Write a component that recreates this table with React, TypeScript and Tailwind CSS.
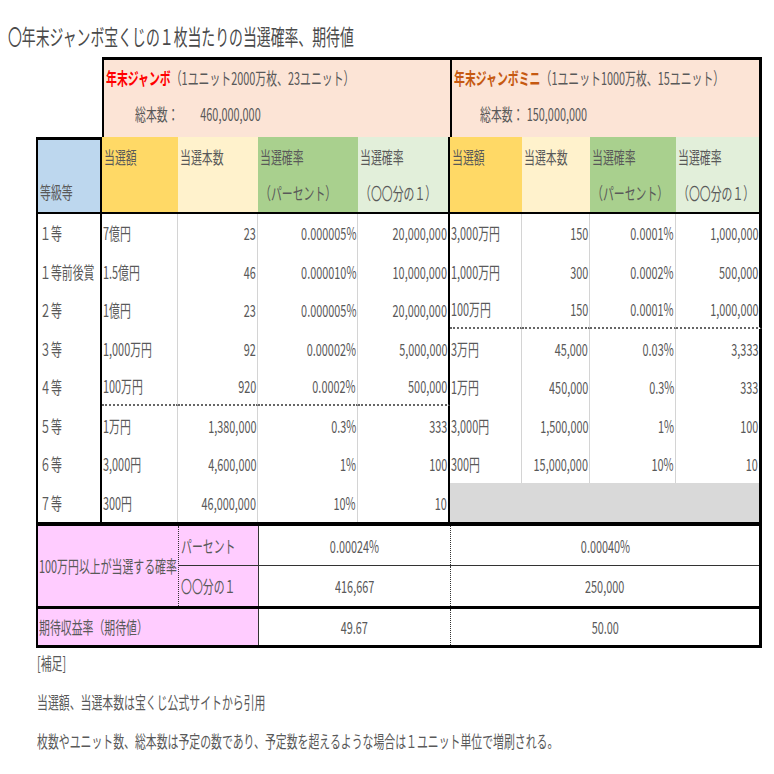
import type { ReactNode } from "react";

// column widths, left to right (等級等 | jumbo x4 | mini x4)
const W = ["w-[66px]", "w-[76px]", "w-[80px]", "w-[100px]", "w-[92px]", "w-[72px]", "w-[68px]", "w-[86px]", "w-[86px]"];

const labels = ["１等", "１等前後賞", "２等", "３等", "４等", "５等", "６等", "７等"];

const jumbo = [
  ["7億円", "23", "0.000005%", "20,000,000"],
  ["1.5億円", "46", "0.000010%", "10,000,000"],
  ["1億円", "23", "0.000005%", "20,000,000"],
  ["1,000万円", "92", "0.00002%", "5,000,000"],
  ["100万円", "920", "0.0002%", "500,000"],
  ["1万円", "1,380,000", "0.3%", "333"],
  ["3,000円", "4,600,000", "1%", "100"],
  ["300円", "46,000,000", "10%", "10"],
];

const mini: (string[] | null)[] = [
  ["3,000万円", "150", "0.0001%", "1,000,000"],
  ["1,000万円", "300", "0.0002%", "500,000"],
  ["100万円", "150", "0.0001%", "1,000,000"],
  ["3万円", "45,000", "0.03%", "3,333"],
  ["1万円", "450,000", "0.3%", "333"],
  ["3,000円", "1,500,000", "1%", "100"],
  ["300円", "15,000,000", "10%", "10"],
  null,
];

// the sheet's font is a narrow one, so squeeze the glyphs horizontally
function T({
  children,
  o = "l",
  s = "scale-x-[0.64]",
}: {
  children: ReactNode;
  o?: "l" | "r" | "c";
  s?: string;
}) {
  const origin = o === "r" ? "origin-right" : o === "c" ? "origin-center" : "origin-left";
  return <span className={`inline-block whitespace-nowrap ${s} ${origin}`}>{children}</span>;
}

function HeadCell({ w, bg, l1, l2, edge }: { w: string; bg: string; l1?: string; l2?: string; edge: string }) {
  return (
    <div className={`${w} ${bg} ${edge} flex flex-col pt-[2px] pl-[2px]`}>
      <div className="h-[36px] leading-[36px]">{l1 && <T>{l1}</T>}</div>
      <div className="h-[36px] leading-[36px]">{l2 && <T>{l2}</T>}</div>
    </div>
  );
}

const gridR = "border-r border-[#d4d4d4]";

export default function App() {
  return (
    <div className="min-h-[774px] w-[774px] overflow-hidden bg-white font-['Noto_Sans_CJK_JP',sans-serif] text-[17px] text-[#595959]">
      <div className="h-[57px] pl-[8px] pt-[22px] text-[22px] leading-[26px] text-[#4a4a4a]">
        <T s="scale-x-[0.63]">〇年末ジャンボ宝くじの１枚当たりの当選確率、期待値</T>
      </div>

      <div className="ml-[36px] w-[726px]">
        {/* lottery header */}
        <div className="flex h-[80px]">
          <div className="w-[66px]" />
          <div className="w-[348px] border-l-2 border-t-[3px] border-black bg-[#fce4d6] pl-[2px] leading-[36px]">
            <div>
              <T>
                <span className="font-bold text-[#ff0000]">年末ジャンボ</span>（1ユニット2000万枚、23ユニット）
              </T>
            </div>
            <div className="pl-[29px]">
              <T>
                総本数：<span className="ml-[34px]">460,000,000</span>
              </T>
            </div>
          </div>
          <div className="w-[312px] border-l-2 border-r-[3px] border-t-[3px] border-black bg-[#fce4d6] pl-[2px] leading-[36px]">
            <div>
              <T>
                <span className="font-bold text-[#c65911]">年末ジャンボミニ</span>（1ユニット1000万枚、15ユニット）
              </T>
            </div>
            <div className="pl-[26px]">
              <T>
                総本数：<span className="ml-[5px]">150,000,000</span>
              </T>
            </div>
          </div>
        </div>

        {/* column header */}
        <div className="flex h-[77px] border-b-2 border-black">
          <div className="w-[66px] border-x-2 border-t-[3px] border-black bg-[#bdd7ee] pl-[2px]">
            <div className="h-[34px]" />
            <div className="h-[36px] leading-[36px]">
              <T>等級等</T>
            </div>
          </div>
          <HeadCell w={W[1]} bg="bg-[#ffd966]" l1="当選額" edge="" />
          <HeadCell w={W[2]} bg="bg-[#fff2cc]" l1="当選本数" edge="" />
          <HeadCell w={W[3]} bg="bg-[#a9d08e]" l1="当選確率" l2="（パーセント）" edge="" />
          <HeadCell w={W[4]} bg="bg-[#e2efda]" l1="当選確率" l2="（〇〇分の１）" edge="border-r-2 border-black" />
          <HeadCell w={W[5]} bg="bg-[#ffd966]" l1="当選額" edge="" />
          <HeadCell w={W[6]} bg="bg-[#fff2cc]" l1="当選本数" edge="" />
          <HeadCell w={W[7]} bg="bg-[#a9d08e]" l1="当選確率" l2="（パーセント）" edge="" />
          <HeadCell w={W[8]} bg="bg-[#e2efda]" l1="当選確率" l2="（〇〇分の１）" edge="border-r-[3px] border-black" />
        </div>

        {/* prize rows */}
        {labels.map((label, i) => {
          const h = i % 2 ? "h-[39px]" : "h-[38px]";
          const jd = i === 4 ? "border-b-2 border-b-[#666] [border-bottom-style:dotted]" : "";
          const md = i === 2 ? "border-b-2 border-b-[#666] [border-bottom-style:dotted]" : "";
          const j = jumbo[i];
          const m = mini[i];
          return (
            <div key={label} className={`flex ${h}`}>
              <div className={`${W[0]} flex items-center border-x-2 border-black pl-[2px]`}>
                <T>{label}</T>
              </div>
              <div className={`${W[1]} ${gridR} ${jd} flex items-center pl-[1px]`}>
                <T>{j[0]}</T>
              </div>
              <div className={`${W[2]} ${gridR} ${jd} flex items-center justify-end pr-[1px]`}>
                <T o="r">{j[1]}</T>
              </div>
              <div className={`${W[3]} ${gridR} ${jd} flex items-center justify-end pr-[1px]`}>
                <T o="r">{j[2]}</T>
              </div>
              <div className={`${W[4]} border-r-2 border-black ${jd} flex items-center justify-end pr-[1px]`}>
                <T o="r">{j[3]}</T>
              </div>
              {m ? (
                <>
                  <div className={`${W[5]} ${gridR} ${md} flex items-center pl-[1px]`}>
                    <T>{m[0]}</T>
                  </div>
                  <div className={`${W[6]} ${gridR} ${md} flex items-center justify-end pr-[1px]`}>
                    <T o="r">{m[1]}</T>
                  </div>
                  <div className={`${W[7]} ${gridR} ${md} flex items-center justify-end pr-[1px]`}>
                    <T o="r">{m[2]}</T>
                  </div>
                  <div className={`${W[8]} border-r-[3px] border-black ${md} flex items-center justify-end pr-[1px]`}>
                    <T o="r">{m[3]}</T>
                  </div>
                </>
              ) : (
                <div className="w-[312px] border-r-[3px] border-black bg-[#d9d9d9]" />
              )}
            </div>
          );
        })}

        {/* 100万円以上 */}
        <div className="flex border-l-2 border-r-[3px] border-t-4 border-black">
          <div className="flex w-[140px] items-center bg-[#ffccff] pl-[1px]">
            <T>100万円以上が当選する確率</T>
          </div>
          <div className="w-[80px] border-l border-dotted border-[#333] bg-[#ffccff]">
            <div className="flex h-[40px] items-center border-b border-[#333] pl-[2px]">
              <T>パーセント</T>
            </div>
            <div className="flex h-[40px] items-center pl-[2px]">
              <T>〇〇分の１</T>
            </div>
          </div>
          <div className="w-[501px]">
            <div className="flex h-[40px] border-b border-[#333]">
              <div className="flex w-[192px] items-center justify-center border-l border-[#333]">
                <T o="c">0.00024%</T>
              </div>
              <div className="flex w-[309px] items-center justify-center border-l border-dotted border-[#333]">
                <T o="c">0.00040%</T>
              </div>
            </div>
            <div className="flex h-[40px]">
              <div className="flex w-[192px] items-center justify-center border-l border-[#333]">
                <T o="c">416,667</T>
              </div>
              <div className="flex w-[309px] items-center justify-center border-l border-dotted border-[#333]">
                <T o="c">250,000</T>
              </div>
            </div>
          </div>
        </div>

        {/* 期待値 */}
        <div className="flex h-[42px] border-y-[3px] border-l-2 border-r-[3px] border-black">
          <div className="flex w-[220px] items-center bg-[#ffccff] pl-[1px]">
            <T>期待収益率（期待値）</T>
          </div>
          <div className="flex w-[192px] items-center justify-center border-l border-[#333]">
            <T o="c">49.67</T>
          </div>
          <div className="flex w-[309px] items-center justify-center border-l border-dotted border-[#333]">
            <T o="c">50.00</T>
          </div>
        </div>

        {/* notes */}
        <div className="w-[726px] overflow-hidden pl-[1px]">
          <div className="h-[30px] leading-[30px]">
            <T>[補足]</T>
          </div>
          <div className="mt-[5px] h-[38px] leading-[38px]">
            <T>当選額、当選本数は宝くじ公式サイトから引用</T>
          </div>
          <div className="h-[39px] leading-[39px]">
            <T>枚数やユニット数、総本数は予定の数であり、予定数を超えるような場合は１ユニット単位で増刷される。</T>
          </div>
        </div>
      </div>
    </div>
  );
}
